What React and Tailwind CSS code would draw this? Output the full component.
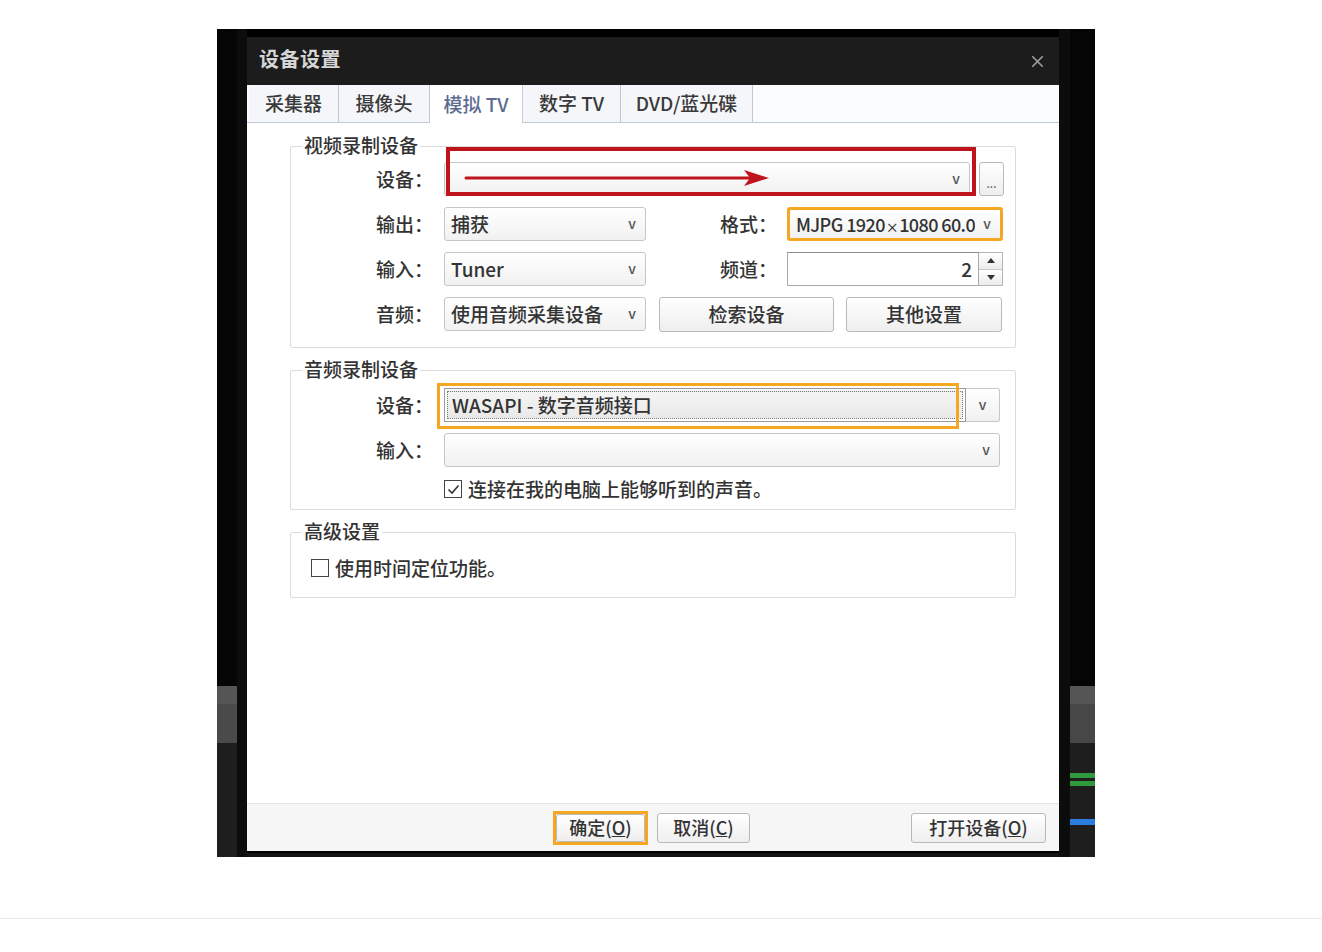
import React from "react";
import { X } from "lucide-react";

function Combo({ className = "", children, arrow = true }) {
  return (
    <div
      className={`flex items-center justify-between h-[34px] border border-[#c6c6c6] rounded-[3px] bg-linear-to-b from-white to-[#f1f1f1] pl-[6px] pr-[9px] ${className}`}
    >
      <span className="truncate">{children}</span>
      {arrow && <span className="text-[14px] text-[#555] leading-none pb-[2px]">v</span>}
    </div>
  );
}

function Btn({ className = "", children }) {
  return (
    <div
      className={`flex items-center justify-center border border-[#b9b9b9] rounded-[3px] bg-linear-to-b from-white to-[#eeeeee] ${className}`}
    >
      {children}
    </div>
  );
}

function Tab({ className = "", active = false, children }) {
  return (
    <div
      className={
        active
          ? `flex items-center justify-center h-full bg-white border-r border-[#c9cedc] text-[#5c6b90] ${className}`
          : `flex items-center justify-center h-full bg-[#f5f6f9] border-r border-b border-[#c0c7d8] text-[#3a3a3a] ${className}`
      }
    >
      {children}
    </div>
  );
}

function Label({ className = "", children }) {
  return <div className={`text-right shrink-0 ${className}`}>{children}</div>;
}

export default function App() {
  return (
    <div className="w-[1322px] h-[952px] bg-white font-['Noto_Sans_CJK_SC','Noto_Sans',sans-serif] font-medium text-[#333] text-[19px] overflow-hidden">
      <div className="pt-[29px] pl-[217px]">
        <div className="flex w-[878px] h-[828px] bg-black">
          {/* left strip */}
          <div className="flex w-[30px] h-full">
            <div className="w-[20px] h-full flex flex-col">
              <div className="h-[657px] bg-[#050505]" />
              <div className="h-[18px] bg-[#555555]" />
              <div className="h-[39px] bg-[#4a4a4a]" />
              <div className="flex-1 bg-[#1e1e1e]" />
            </div>
            <div className="w-[10px] h-full bg-[#0c0c0c]" />
          </div>

          {/* dialog */}
          <div className="w-[812px] h-full flex flex-col">
            <div className="h-[8px] bg-black" />
            <div className="h-[48px] bg-[#1c1c1c] flex items-center justify-between pl-[12px] pr-[12px]">
              <span className="text-[20px] font-bold text-[#d6d6d6] tracking-[0.5px] pb-[4px]">设备设置</span>
              <X size={19} strokeWidth={2.2} color="#9b9b9b" />
            </div>
            {/* tabs */}
            <div className="h-[38px] flex bg-[#fbfcfe]">
              <div className="w-[2px] h-full border-b border-[#c0c7d8]" />
              <Tab className="w-[90px]">采集器</Tab>
              <Tab className="w-[91px]">摄像头</Tab>
              <Tab active className="w-[93px]">模拟 TV</Tab>
              <Tab className="w-[98px]">数字 TV</Tab>
              <Tab className="w-[132px]">DVD/蓝光碟</Tab>
              <div className="flex-1 h-full border-b border-[#c0c7d8]" />
            </div>

            {/* content */}
            <div className="h-[680px] bg-white px-[43px]">
              {/* video group */}
              <fieldset className="mt-[11px] border border-[#dcdcdc] rounded-[2px]">
                <legend className="ml-[11px] px-[2px] text-[19px] leading-[22px] pb-[2px]">视频录制设备</legend>
                <div className="pt-[4px] pb-[16px] flex flex-col gap-[11px]">
                  <div className="flex items-center h-[34px]">
                    <Label className="w-[142px]">设备：</Label>
                    <div className="relative ml-[11px]">
                      <Combo className="w-[526px]" />
                      <div className="absolute left-[2px] top-[-15px] w-[530px] h-[49px] border-[4px] border-[#c0141c]" />
                      <svg className="absolute left-[20px] top-[6px]" width="306" height="20" viewBox="0 0 306 20">
                        <line x1="2" y1="10" x2="290" y2="10" stroke="#c0141c" strokeWidth="3" strokeLinecap="round" />
                        <path d="M280 2 L305 10 L280 18 L286 10 Z" fill="#c0141c" />
                      </svg>
                    </div>
                    <Btn className="ml-[9px] w-[25px] h-[34px] items-end pb-[6px]">
                      <span className="text-[11px] leading-none text-[#555]">...</span>
                    </Btn>
                  </div>

                  <div className="flex items-center h-[34px]">
                    <Label className="w-[142px]">输出：</Label>
                    <Combo className="ml-[11px] w-[202px]">捕获</Combo>
                    <Label className="w-[131px]">格式：</Label>
                    <Combo className="ml-[10px] w-[216px] border-[3px] border-[#f5a623] pl-[4px] pr-[8px]">
                      <span className="text-[18px] tracking-[-0.6px]">
                        MJPG 1920<span className="text-[13px] px-[1px]">×</span>1080 60.0
                      </span>
                    </Combo>
                  </div>

                  <div className="flex items-center h-[34px]">
                    <Label className="w-[142px]">输入：</Label>
                    <Combo className="ml-[11px] w-[202px]">Tuner</Combo>
                    <Label className="w-[131px]">频道：</Label>
                    <div className="ml-[10px] w-[192px] h-[34px] border border-[#a9a9a9] border-t-[#8c8c8c] bg-white flex items-center justify-end pr-[6px]">
                      2
                    </div>
                    <div className="w-[24px] h-[34px] flex flex-col border border-l-0 border-[#b5b5b5]">
                      <div className="flex-1 flex items-center justify-center bg-linear-to-b from-white to-[#ececec] border-b border-[#c8c8c8]">
                        <svg width="8" height="5" viewBox="0 0 8 5"><path d="M0 5 L4 0 L8 5 Z" fill="#333" /></svg>
                      </div>
                      <div className="flex-1 flex items-center justify-center bg-linear-to-b from-white to-[#ececec]">
                        <svg width="8" height="5" viewBox="0 0 8 5"><path d="M0 0 L4 5 L8 0 Z" fill="#333" /></svg>
                      </div>
                    </div>
                  </div>

                  <div className="flex items-center h-[34px]">
                    <Label className="w-[142px]">音频：</Label>
                    <Combo className="ml-[11px] w-[202px]">使用音频采集设备</Combo>
                    <Btn className="ml-[13px] w-[175px] h-[35px]">检索设备</Btn>
                    <Btn className="ml-[12px] w-[156px] h-[35px]">其他设置</Btn>
                  </div>
                </div>
              </fieldset>

              {/* audio group */}
              <fieldset className="mt-[10px] border border-[#dcdcdc] rounded-[2px]">
                <legend className="ml-[11px] px-[2px] text-[19px] leading-[22px] pb-[2px]">音频录制设备</legend>
                <div className="pt-[6px] pb-[8px] flex flex-col">
                  <div className="flex items-center h-[34px]">
                    <Label className="w-[142px]">设备：</Label>
                    <div className="relative ml-[11px] flex">
                      <div className="w-[522px] h-[34px] border border-[#9a9a9a] bg-white p-[2px]">
                        <div className="h-full border border-dotted border-[#777] bg-linear-to-b from-[#f4f4f4] to-[#e9e9e9] flex items-center pl-[4px]">
                          WASAPI - 数字音频接口
                        </div>
                      </div>
                      <div className="w-[34px] h-[34px] border border-l-0 border-[#c6c6c6] rounded-r-[3px] bg-linear-to-b from-white to-[#f1f1f1] flex items-center justify-center">
                        <span className="text-[14px] text-[#555] leading-none pb-[2px]">v</span>
                      </div>
                      <div className="absolute left-[-7px] top-[-5px] w-[522px] h-[46px] border-[3px] border-[#f5a623]" />
                    </div>
                  </div>
                  <div className="flex items-center h-[34px] mt-[11px]">
                    <Label className="w-[142px]">输入：</Label>
                    <Combo className="ml-[11px] w-[556px]" />
                  </div>
                  <div className="flex items-center h-[24px] mt-[10px] pl-[153px]">
                    <div className="w-[18px] h-[18px] border border-[#444] bg-white flex items-center justify-center">
                      <svg width="13" height="11" viewBox="0 0 13 11">
                        <path d="M1.5 5.5 L5 9 L11.5 1.5" fill="none" stroke="#333" strokeWidth="1.6" />
                      </svg>
                    </div>
                    <span className="ml-[6px]">连接在我的电脑上能够听到的声音。</span>
                  </div>
                </div>
              </fieldset>

              {/* advanced group */}
              <fieldset className="mt-[10px] border border-[#dcdcdc] rounded-[2px]">
                <legend className="ml-[11px] px-[2px] text-[19px] leading-[22px] pb-[2px]">高级设置</legend>
                <div className="pt-[12px] pb-[17px]">
                  <div className="flex items-center h-[24px] pl-[20px]">
                    <div className="w-[18px] h-[18px] border border-[#444] bg-white" />
                    <span className="ml-[6px]">使用时间定位功能。</span>
                  </div>
                </div>
              </fieldset>
            </div>

            {/* footer */}
            <div className="h-[48px] bg-[#f6f6f6] border-t border-[#e4e4e4] flex items-center pl-[306px] pr-[13px] text-[18px]">
              <div className="w-[95px] h-[34px] border-[3px] border-[#f5a623] flex">
                <Btn className="w-full h-full">
                  确定(<span className="underline">O</span>)
                </Btn>
              </div>
              <Btn className="ml-[9px] w-[93px] h-[30px]">
                取消(<span className="underline">C</span>)
              </Btn>
              <Btn className="ml-auto w-[135px] h-[30px]">
                打开设备(<span className="underline">O</span>)
              </Btn>
            </div>
            <div className="h-[6px] bg-[#141414] border-t-[2px] border-black" />
          </div>

          {/* right strip */}
          <div className="flex w-[36px] h-full">
            <div className="w-[11px] h-full bg-[#0c0c0c]" />
            <div className="w-[25px] h-full flex flex-col">
              <div className="h-[657px] bg-[#050505]" />
              <div className="h-[18px] bg-[#555555]" />
              <div className="h-[39px] bg-[#474747]" />
              <div className="h-[30px] bg-[#1e1e1e]" />
              <div className="h-[5px] bg-[#2f9a3c]" />
              <div className="h-[3px] bg-[#1e1e1e]" />
              <div className="h-[5px] bg-[#2f9a3c]" />
              <div className="h-[33px] bg-[#1e1e1e]" />
              <div className="h-[6px] bg-[#2b7de0]" />
              <div className="flex-1 bg-[#1e1e1e]" />
            </div>
          </div>
        </div>
      </div>
      <div className="mt-[61px] h-px bg-[#e8e8e8]" />
    </div>
  );
}
